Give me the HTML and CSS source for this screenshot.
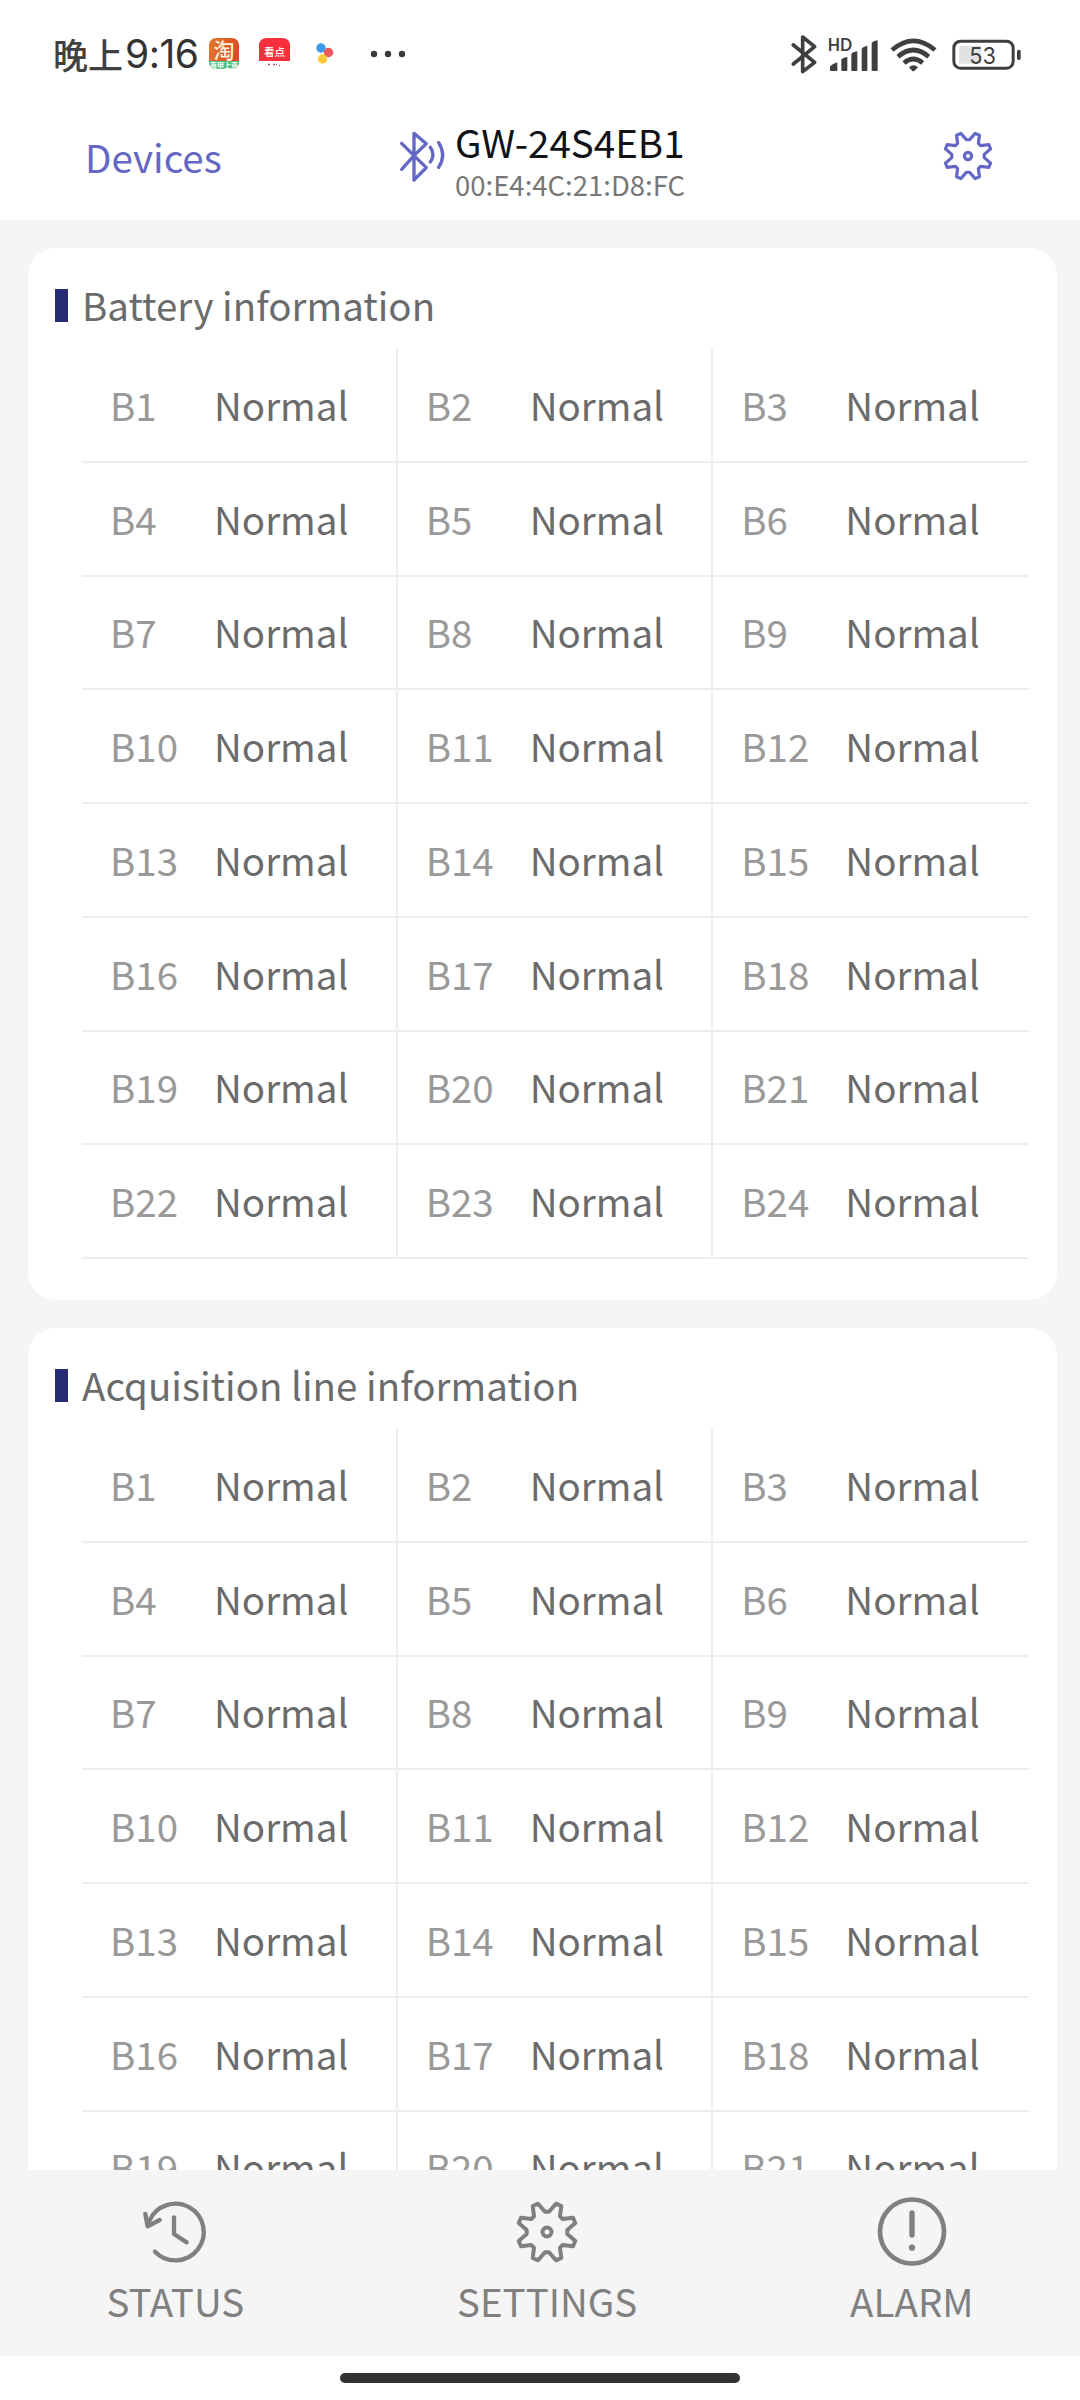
FILE: index.html
```html
<!DOCTYPE html>
<html lang="en">
<head>
  <meta charset="UTF-8" />
  <meta name="viewport" content="width=device-width, initial-scale=1.0" />
  <title>GW-24S4EB1</title>
  <link rel="stylesheet" href="styles.css">
</head>
<body>

  <!-- === STATUS BAR === -->
  <div class="status-bar">
    <span class="clock-cn">晚上</span><span class="clock">9:16</span>
    <svg class="app-icon" width="30" height="31" viewBox="0 0 30 31">
      <defs>
        <linearGradient id="tao" x1="0" y1="0" x2="1" y2="0.3">
          <stop offset="0" stop-color="#e07a2c" />
          <stop offset="1" stop-color="#dc4a28" />
        </linearGradient>
        <clipPath id="round"><rect width="30" height="31" rx="7" /></clipPath>
      </defs>
      <g clip-path="url(#round)">
        <rect width="30" height="31" fill="url(#tao)" />
        <rect y="23" width="30" height="8" fill="#4fc184" />
        <text x="15" y="20" font-size="21" font-weight="500" text-anchor="middle" fill="#fff3dc">淘</text>
        <text x="15" y="30" font-size="7" font-weight="700" text-anchor="middle" fill="#fff">夜甲上亚</text>
      </g>
    </svg>
    <svg class="app-icon kandian" width="31" height="31" viewBox="0 0 31 31">
      <path d="M8 0h15q8 0 8 8v15H0V8q0-8 8-8z" fill="#f8303c" />
      <text x="15.500" y="17.500" font-size="10.500" font-weight="500" text-anchor="middle" fill="#fff">看点</text>
      <path d="M9 26.500h2M14 26.500h2M17 26.500h1M20 27.500h1" stroke="#b0525a" stroke-width="1.500" />
    </svg>
    <svg class="dots-icon" width="18" height="22" viewBox="0 0 18 22">
      <circle cx="5" cy="5" r="4.700" fill="#3c9be8" />
      <circle cx="12.500" cy="9.500" r="4.700" fill="#ee5a5e" />
      <circle cx="6.500" cy="16" r="4.700" fill="#fccb3a" />
    </svg>
    <svg class="more-icon" width="36" height="8" viewBox="0 0 36 8" fill="#3a3a3a">
      <circle cx="4" cy="4" r="3.200" /><circle cx="18" cy="4" r="3.200" /><circle cx="32" cy="4" r="3.200" />
    </svg>

    <div class="status-right">
      <svg width="28" height="40" viewBox="30 40 84 120" fill="none" stroke="#3f3f3f" stroke-width="11" stroke-linecap="round" stroke-linejoin="round">
        <path d="M40 73L104 125L68 153V49L104 78L40 130" />
      </svg>
      <svg class="signal" width="52" height="40" viewBox="144 40 156 120" fill="#3f3f3f">
        <text class="hd" x="143" y="90" font-size="49" textLength="73" lengthAdjust="spacingAndGlyphs">HD</text>
        <path d="M150 150V139Q151 133 172 125V150Q161 152 150 150zM184 150V118Q185 112 202 109V150Q193 152 184 150zM214 150V101Q215 95 232 92V150Q223 152 214 150zM245 150V85Q246 79 262 75V150Q253 152 245 150zM275 150V69Q276 62 293 59V150Q284 152 275 150z" />
      </svg>
      <svg class="wifi" width="49" height="40" viewBox="328 40 147 120" fill="none" stroke="#3f3f3f" stroke-width="14">
        <path d="M337 88Q401 33 466 88" />
        <path d="M355 108Q401 68 447 108" />
        <path d="M373 127Q401 103 429 127" />
        <path d="M388 140Q401 127 415 140L404 151Q401 153 398 151z" fill="#3f3f3f" stroke="none" />
      </svg>
      <svg class="battery" width="72" height="40" viewBox="510 40 216 120">
        <path d="M545 75H604V129H537V83Q537 75 545 75z" fill="#e2e2e2" />
        <rect x="521.500" y="61.500" width="178" height="81" rx="20" fill="none" stroke="#3f3f3f" stroke-width="9" />
        <rect x="711" y="87" width="11" height="31" rx="5" fill="#3f3f3f" />
        <text class="percent" x="608" y="129" font-size="70" textLength="80" lengthAdjust="spacingAndGlyphs" text-anchor="middle">53</text>
      </svg>
    </div>
  </div>

  <!-- === HEADER === -->
  <div class="header">
    <div class="devices">Devices</div>
    <div class="device">
      <svg width="48" height="54" viewBox="28 30 144 162" fill="none" stroke="#6468c4" stroke-width="10" stroke-linecap="round" stroke-linejoin="round">
        <path d="M36 70L73 107L110 143L73 180V40L110 71L73 107L36 148" />
        <path d="M122 82Q138 104 122 126M147 68Q171 105 147 142" />
      </svg>
      <div>
        <div class="device-name">GW-24S4EB1</div>
        <div class="device-mac">00:E4:4C:21:D8:FC</div>
      </div>
    </div>
    <svg class="header-gear" width="50" height="50" viewBox="-31.250 -31.250 62.500 62.500"><use href="#gear" /></svg>
  </div>

  <!-- === CONTENT === -->
  <div class="content">
    <div class="card">
      <div class="card-title"><span>Battery information</span></div>
      <div class="grid" data-count="24"></div>
    </div>
    <div class="card">
      <div class="card-title"><span>Acquisition line information</span></div>
      <div class="grid" data-count="21"></div>
    </div>
  </div>

  <!-- === TABS === -->
  <div class="tabs">
    <div class="tab">
      <svg width="70" height="70" viewBox="33 36 210 210" fill="none" stroke="#808080" stroke-width="13" stroke-linecap="round" stroke-linejoin="round">
        <path d="M61 108A85 85 0 1 1 78 200" />
        <path d="M49 87L56 124L92 105M135 97V147L173 172" />
      </svg>
      <div>STATUS</div>
    </div>
    <div class="tab">
      <svg width="70" height="70" viewBox="-35 -35 70 70">
        <path id="gear" d="M2-20.300L9-28.300L14.300-26L13-15.700L15.700-13L26-14.300L28.300-9L20.300-2V2L28.300 9L26 14.300L15.700 13L13 15.700L14.300 26L9 28.300L2 20.300H-2L-9 28.300L-14.300 26L-13 15.700L-15.700 13L-26 14.300L-28.300 9L-20.300 2V-2L-28.300-9L-26-14.300L-15.700-13L-13-15.700L-14.300-26L-9-28.300L-2-20.300zM4.500 0A4.500 4.500 0 1 1-4.500 0A4.500 4.500 0 1 1 4.500 0z" />
      </svg>
      <div>SETTINGS</div>
    </div>
    <div class="tab">
      <svg width="70" height="70" viewBox="0 0 70 70" fill="none" stroke="#808080" stroke-linecap="round">
        <circle cx="35" cy="34.500" r="32" stroke-width="4.700" />
        <path d="M35 16V38" stroke-width="5.400" />
        <circle cx="35" cy="50.700" r="3.100" fill="#808080" stroke="none" />
      </svg>
      <div>ALARM</div>
    </div>
  </div>

  <div class="home-bar"></div>

  <!-- === SCRIPT === -->
  <script>
    document.querySelectorAll('.grid').forEach(grid => {
      for (let i = 1; i <= grid.dataset.count; i++) {
        grid.innerHTML += `<div class="cell"><span class="label">B${i}</span><span>Normal</span></div>`;
      }
    });
  </script>
</body>
</html>
```

FILE: styles.css
```css
* {
  margin: 0;
  padding: 0;
  box-sizing: border-box;
}

body {
  width: 1080px;
  height: 2400px;
  display: flex;
  flex-direction: column;
  overflow: hidden;
  background: #fff;
  color: #6b6b6b;
  font-family: "Noto Sans CJK SC", sans-serif;
  font-size: 38.5px;
  line-height: 40px;
}

svg {
  display: block;
  flex: none;
}

/* === STATUS BAR === */
.status-bar {
  height: 107px;
  padding: 0 58px 0 53px;
  display: flex;
  align-items: center;
}

.clock-cn {
  font-size: 35px;
  font-weight: 500;
  color: #404040;
}

.clock {
  width: 75px;
  margin-left: 2px;
  font-family: Inter, sans-serif;
  font-size: 39px;
  font-weight: 400;
  letter-spacing: -0.5px;
  color: #333;
}

.app-icon {
  margin-left: 9px;
}

.kandian {
  margin-left: 20px;
}

.dots-icon {
  margin-left: 26px;
}

.more-icon {
  margin-left: 36px;
}

.status-right {
  margin-left: auto;
  display: flex;
  align-items: center;
}

.signal {
  margin-left: 10px;
}

.hd {
  font-family: Lato, sans-serif;
  font-weight: 700;
}

.wifi {
  margin-left: 9px;
}

.battery {
  margin-left: 12px;
}

.percent {
  font-family: Inter, sans-serif;
  font-weight: 400;
  fill: #3f3f3f;
}

/* === HEADER === */
.header {
  height: 113px;
  padding: 0 87px 0 85px;
  display: grid;
  grid-template-columns: 314px 1fr 50px;
  color: #6468c4;
}

.devices {
  padding-top: 29px;
}

.device {
  display: flex;
  gap: 8px;
  padding-top: 14px;
}

.device svg {
  margin-top: 9px;
}

.device-name {
  color: #111116;
}

.device-mac {
  padding-top: 3px;
  font-size: 27.500px;
  color: #777;
}

.header-gear {
  margin-top: 24px;
}

#gear {
  fill: none;
  stroke: currentColor;
  stroke-width: 4;
  stroke-linejoin: round;
}

/* === CARDS === */
.content {
  height: 1950px;
  padding: 28px 23px 0 28px;
  background: #f5f5f5;
  overflow: hidden;
}

.card {
  height: 1052px;
  margin-bottom: 28px;
  padding: 36px 28px 0 27px;
  background: #fff;
  border-radius: 28px;
}

.card-title {
  height: 65px;
  display: flex;
  gap: 14px;
}

.card-title::before {
  content: "";
  width: 13px;
  height: 33px;
  margin-top: 5px;
  background: #262a75;
}

.grid {
  margin-left: 27px;
  display: grid;
  grid-template-columns: repeat(3, 1fr);
  grid-auto-rows: 113.750px;
}

.cell {
  display: flex;
  align-items: center;
  padding: 0 0 2px 28px;
  border-right: 2px solid #eee;
  border-bottom: 2px solid #eee;
}

.cell:nth-child(3n) {
  border-right: none;
}

.label {
  width: 104px;
  color: #999;
}

/* === TABS === */
.tabs {
  height: 186px;
  padding-top: 27px;
  display: flex;
  justify-content: space-around;
  background: #f5f5f5;
  color: #808080;
}

.tab {
  display: flex;
  flex-direction: column;
  align-items: center;
  gap: 13px;
}

/* === HOME BAR === */
.home-bar {
  width: 400px;
  height: 10px;
  margin: 17px auto 0;
  border-radius: 5px;
  background: #333;
}
```
